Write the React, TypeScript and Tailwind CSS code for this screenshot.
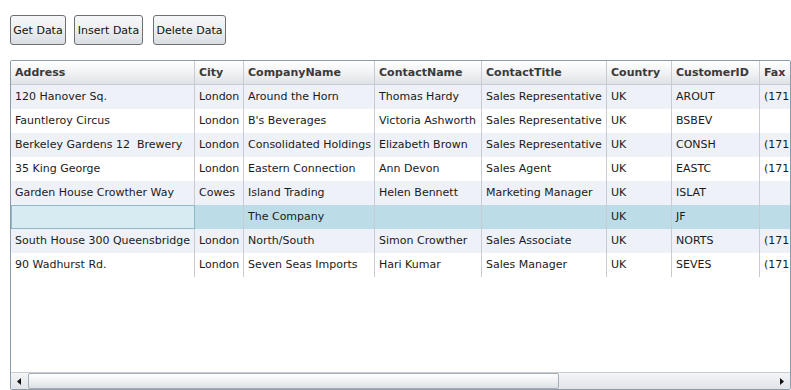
import React from "react";

const cols = [
  { name: "Address", w: 184 },
  { name: "City", w: 49 },
  { name: "CompanyName", w: 131 },
  { name: "ContactName", w: 107 },
  { name: "ContactTitle", w: 125 },
  { name: "Country", w: 65 },
  { name: "CustomerID", w: 88 },
  { name: "Fax", w: 120 },
];

const rows: string[][] = [
  ["120 Hanover Sq.", "London", "Around the Horn", "Thomas Hardy", "Sales Representative", "UK", "AROUT", "(171) 555-6750"],
  ["Fauntleroy Circus", "London", "B's Beverages", "Victoria Ashworth", "Sales Representative", "UK", "BSBEV", ""],
  ["Berkeley Gardens 12  Brewery", "London", "Consolidated Holdings", "Elizabeth Brown", "Sales Representative", "UK", "CONSH", "(171) 555-9199"],
  ["35 King George", "London", "Eastern Connection", "Ann Devon", "Sales Agent", "UK", "EASTC", "(171) 555-3373"],
  ["Garden House Crowther Way", "Cowes", "Island Trading", "Helen Bennett", "Marketing Manager", "UK", "ISLAT", ""],
  ["", "", "The Company", "", "", "UK", "JF", ""],
  ["South House 300 Queensbridge", "London", "North/South", "Simon Crowther", "Sales Associate", "UK", "NORTS", "(171) 555-2530"],
  ["90 Wadhurst Rd.", "London", "Seven Seas Imports", "Hari Kumar", "Sales Manager", "UK", "SEVES", "(171) 555-5646"],
];

function Btn({ label, cls }: { label: string; cls: string }) {
  return (
    <button className={`h-[30px] rounded-[3px] border border-[#707070] bg-gradient-to-b from-[#f6f7f8] via-[#eceef0] to-[#d9dde2] text-[11px] text-[#111] leading-none whitespace-nowrap flex items-center justify-center ${cls}`}>
      {label}
    </button>
  );
}

export default function App() {
  const font = { fontFamily: "Tahoma, 'DejaVu Sans', Verdana, sans-serif" };
  return (
    <div className="w-[791px] h-[390px] bg-white overflow-hidden relative" style={font}>
      <div className="flex gap-[8px] pl-[10px] pt-[15px]">
        <Btn label="Get Data" cls="w-[56px]" />
        <Btn label="Insert Data" cls="w-[69px]" />
        <Btn label="Delete Data" cls="w-[73px] ml-[2px]" />
      </div>
      <div className="absolute left-[10px] top-[60px] w-[781px] h-[330px] border border-[#8b9cab] rounded-[2px] overflow-hidden flex flex-col">
        <div className="flex-1 overflow-hidden">
          <div className="flex h-[24px] bg-gradient-to-b from-[#ffffff] via-[#f1f2f4] to-[#dfe2e6] border-b border-[#c8ccd2]">
            {cols.map((c, i) => (
              <div
                key={c.name}
                className={`shrink-0 flex items-center pl-[4px] pt-[1px] text-[11px] font-bold text-[#3a3a3a] whitespace-nowrap overflow-hidden ${i < cols.length - 1 ? "border-r border-[#c8ccd2]" : ""}`}
                style={{ width: c.w }}
              >
                {c.name}
              </div>
            ))}
          </div>
          {rows.map((r, ri) => {
            const selected = ri === 5;
            const bg = selected ? "bg-[#bcdde8]" : ri % 2 === 0 ? "bg-[#eef1f7]" : "bg-white";
            return (
              <div key={ri} className={`flex h-[24px] ${bg}`}>
                {r.map((cell, ci) => {
                  const current = selected && ci === 0;
                  return (
                    <div
                      key={ci}
                      className={`shrink-0 flex items-center pl-[4px] text-[11px] text-[#1a1a1a] whitespace-pre overflow-hidden ${
                        current ? "bg-[#d7ebf3] border border-[#8fb9c9]" : ci < cols.length - 1 ? "border-r border-[#c8ccd2]" : ""
                      }`}
                      style={{ width: cols[ci].w }}
                    >
                      {cell}
                    </div>
                  );
                })}
              </div>
            );
          })}
        </div>
        <div className="h-[17px] flex bg-gradient-to-b from-[#f4f5f7] to-[#e0e4e9] border-t border-[#c9cdd2]">
          <div className="w-[17px] flex items-center justify-center">
            <svg width="5" height="7" viewBox="0 0 5 7"><path d="M4 0 L0 3.5 L4 7 Z" fill="#111" /></svg>
          </div>
          <div className="w-[531px] h-[16px] rounded-[2px] border border-[#a5adb6] bg-gradient-to-b from-[#ffffff] via-[#eff1f3] to-[#dde1e6]" />
          <div className="flex-1" />
          <div className="w-[17px] flex items-center justify-center">
            <svg width="5" height="7" viewBox="0 0 5 7"><path d="M1 0 L5 3.5 L1 7 Z" fill="#111" /></svg>
          </div>
        </div>
      </div>
    </div>
  );
}
